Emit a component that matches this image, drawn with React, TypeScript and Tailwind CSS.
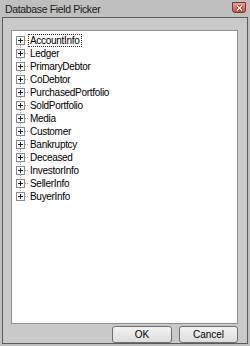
import React from 'react'

const fields = [
  'AccountInfo',
  'Ledger',
  'PrimaryDebtor',
  'CoDebtor',
  'PurchasedPortfolio',
  'SoldPortfolio',
  'Media',
  'Customer',
  'Bankruptcy',
  'Deceased',
  'InvestorInfo',
  'SellerInfo',
  'BuyerInfo',
]

function Expander({ first, last }: { first: boolean; last: boolean }) {
  return (
    <svg width="13" height="13" viewBox="0 0 13 13" className="shrink-0">
      {!first && <line x1="4.5" y1="0" x2="4.5" y2="2" stroke="#a0a0a0" strokeDasharray="1 1" />}
      {!last && <line x1="4.5" y1="11" x2="4.5" y2="13" stroke="#a0a0a0" strokeDasharray="1 1" />}
      <line x1="9" y1="6.5" x2="13" y2="6.5" stroke="#a0a0a0" strokeDasharray="1 1" />
      <rect x="0.5" y="2.5" width="8" height="8" fill="#fff" stroke="#8a8a8a" />
      <line x1="2" y1="6.5" x2="7" y2="6.5" stroke="#202020" />
      <line x1="4.5" y1="4" x2="4.5" y2="9" stroke="#202020" />
    </svg>
  )
}

export default function App() {
  return (
    <div
      className="w-[250px] h-[346px] bg-[#bfbfbf] flex flex-col text-black"
      style={{ fontFamily: '"Liberation Sans", Arial, sans-serif' }}
    >
      {/* title bar */}
      <div className="h-[17px] flex items-start justify-between">
        <span className="pl-[5px] pt-[3px] text-[10.5px] leading-[12px] tracking-[-0.35px] text-[#1a1a1a]">
          Database Field Picker
        </span>
        <div className="mr-[4px] mt-[2px] w-[14px] h-[11px] rounded-b-[3px] border border-[#7a3a30] bg-gradient-to-b from-[#eba394] to-[#c8503c] flex items-center justify-center">
          <svg width="7" height="6" viewBox="0 0 7 6">
            <path d="M1 0.5 L6 5.5 M6 0.5 L1 5.5" stroke="#5a2018" strokeWidth="2.6" />
            <path d="M1 0.5 L6 5.5 M6 0.5 L1 5.5" stroke="#fff" strokeWidth="1.4" />
          </svg>
        </div>
      </div>

      {/* client area */}
      <div className="flex-1 mx-[2px] mb-[2px] border border-[#5c5c5c] bg-[#c9c9c9] flex flex-col pl-[8px] pr-[9px] pt-[12px]">
        <div className="h-[294px] border border-[#8e8f8f] bg-white pt-[3px] pl-[4px]">
          {fields.map((f, i) => (
            <div key={f} className="h-[13px] flex items-center">
              <Expander first={i === 0} last={i === fields.length - 1} />
              <span
                className={
                  'text-[10px] leading-[11px] tracking-[-0.3px] px-[1px] ' +
                  (i === 0 ? 'border border-dotted border-[#333] -ml-[1px]' : 'border border-transparent -ml-[1px]')
                }
              >
                {f}
              </span>
            </div>
          ))}
        </div>
        <div className="flex justify-end gap-[7px] mt-[2px] pr-[-1px]">
          <button className="w-[60px] h-[17px] rounded-[3px] border border-[#707070] bg-gradient-to-b from-[#f3f3f3] to-[#dcdcdc] text-[10px] leading-[15px]">
            OK
          </button>
          <button className="w-[59px] h-[17px] rounded-[3px] border border-[#707070] bg-gradient-to-b from-[#f3f3f3] to-[#dcdcdc] text-[10px] leading-[15px]">
            Cancel
          </button>
        </div>
      </div>
    </div>
  )
}
